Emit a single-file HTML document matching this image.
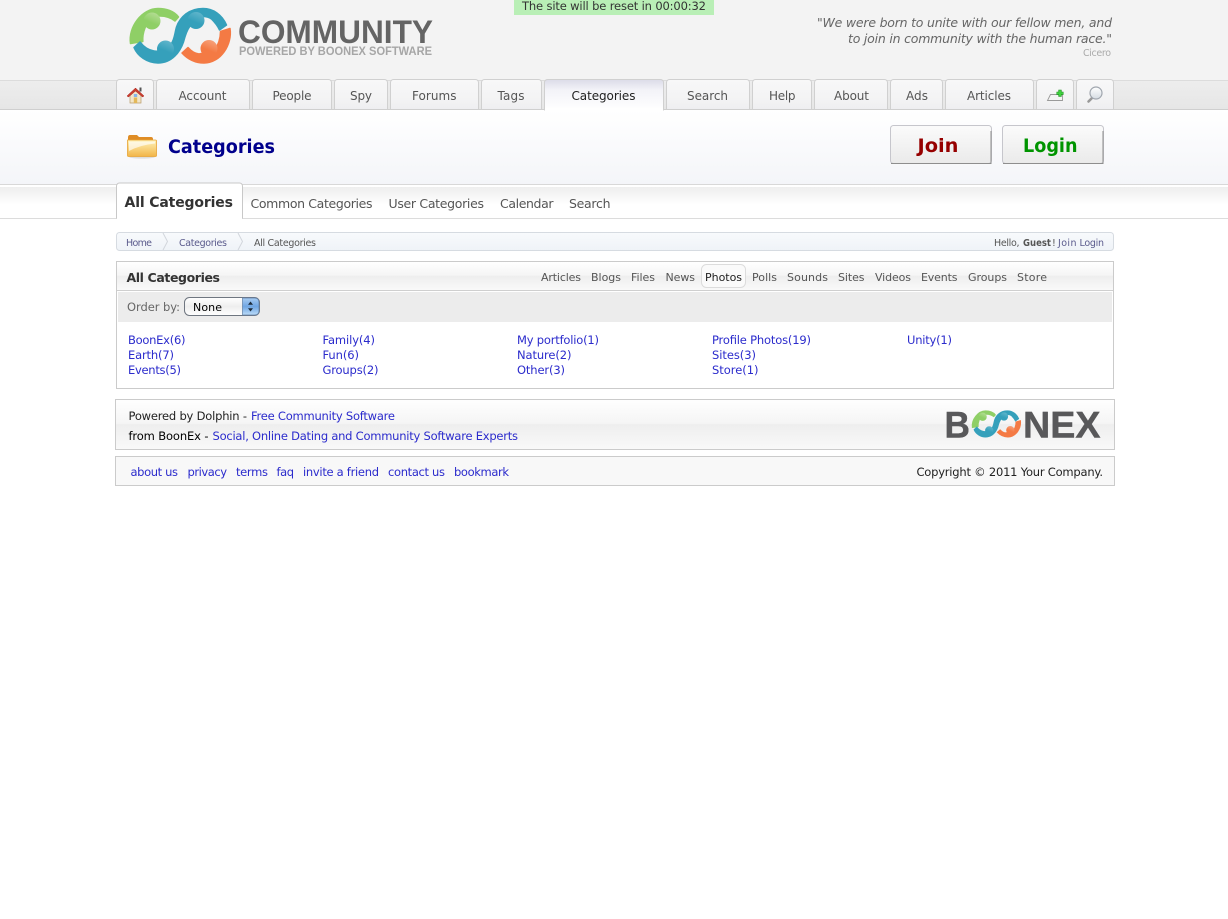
<!DOCTYPE html>
<html lang="en"><head><meta charset="utf-8"><title>Categories</title>
<style>
html,body{margin:0;padding:0;background:#fff}
svg{display:block}
text{font-family:"DejaVu Sans","Liberation Sans",sans-serif;font-size:12px;white-space:pre}
.n{fill:#555;font-size:12px}
.b{font-weight:bold}
.c{fill:#2b2bcc;font-size:11.5px}
.t{fill:#555;font-size:11px}
.s{fill:#555;font-size:12.5px}
.bc{fill:#5a5a8c;font-size:9.5px}
.f{fill:#222;font-size:11.5px}
.q{fill:#666;font-style:italic;font-size:12.5px}
</style></head><body>
<svg xmlns="http://www.w3.org/2000/svg" width="1228" height="919" viewBox="0 0 1228 919">
<defs>
<linearGradient id="tab" x1="0" y1="0" x2="0" y2="1"><stop offset="0" stop-color="#f8f8f8"/><stop offset=".5" stop-color="#f3f3f4"/><stop offset="1" stop-color="#e9e9ed"/></linearGradient>
<linearGradient id="act" x1="0" y1="0" x2="0" y2="1"><stop offset="0" stop-color="#dcdce8"/><stop offset=".35" stop-color="#f3f3f8"/><stop offset="1" stop-color="#fff"/></linearGradient>
<linearGradient id="strip" x1="0" y1="0" x2="0" y2="1"><stop offset="0" stop-color="#ededed"/><stop offset="1" stop-color="#e6e6e6"/></linearGradient>
<linearGradient id="title" x1="0" y1="0" x2="0" y2="1"><stop offset="0" stop-color="#fff"/><stop offset="1" stop-color="#f4f5f9"/></linearGradient>
<linearGradient id="sub" x1="0" y1="0" x2="0" y2="1"><stop offset="0" stop-color="#eeeeee"/><stop offset="1" stop-color="#fff"/></linearGradient>
<linearGradient id="btn" x1="0" y1="0" x2="0" y2="1"><stop offset="0" stop-color="#fbfbfb"/><stop offset="1" stop-color="#eaeaea"/></linearGradient>
<linearGradient id="hd" x1="0" y1="0" x2="0" y2="1"><stop offset="0" stop-color="#fff"/><stop offset=".48" stop-color="#f5f5f5"/><stop offset=".5" stop-color="#eeeeee"/><stop offset="1" stop-color="#f9f9f9"/></linearGradient>
<linearGradient id="bc" x1="0" y1="0" x2="0" y2="1"><stop offset="0" stop-color="#f8fafc"/><stop offset="1" stop-color="#eff3f8"/></linearGradient>
<linearGradient id="step" x1="0" y1="0" x2="0" y2="1"><stop offset="0" stop-color="#a9cdf2"/><stop offset=".5" stop-color="#6fa5e2"/><stop offset="1" stop-color="#bcdcf8"/></linearGradient>
<linearGradient id="sel" x1="0" y1="0" x2="0" y2="1"><stop offset="0" stop-color="#fff"/><stop offset=".5" stop-color="#eee"/><stop offset="1" stop-color="#fff"/></linearGradient>
<linearGradient id="fold" x1="0" y1="0" x2="0" y2="1"><stop offset="0" stop-color="#fff3b8"/><stop offset="1" stop-color="#f2b548"/></linearGradient>
<linearGradient id="lens" x1="0" y1="0" x2="0" y2="1"><stop offset="0" stop-color="#fff"/><stop offset="1" stop-color="#d5dbe2"/></linearGradient>
<linearGradient id="hg" x1=".7" y1="0" x2=".3" y2="1"><stop offset="0" stop-color="#b4dd94"/><stop offset=".6" stop-color="#8fcf66"/></linearGradient>
<linearGradient id="hb" x1=".7" y1="0" x2=".3" y2="1"><stop offset="0" stop-color="#62b6cc"/><stop offset=".6" stop-color="#35a0bb"/></linearGradient>
<linearGradient id="ho" x1=".7" y1="0" x2=".3" y2="1"><stop offset="0" stop-color="#f7a27c"/><stop offset=".6" stop-color="#f47a44"/></linearGradient>
<g id="rings">
<path d="M130.500 43.500C128 27 142 8.500 158 8.500C166 8.500 174 11 178.500 17L175 21C170 17 165 16 160 16L150 16L145 28C143 33 142.500 37 142.800 41.500Z" fill="#8fcf66" stroke="#8fcf66" stroke-width="1.500" stroke-linejoin="round"/>
<path d="M134 47.500C137.500 56 147 63 158 63C172 63 180 52 183.500 42C185.500 34 187 30 190 26L197 17C203 16 208 16 211.500 19C214.500 22 217.500 25.500 219.500 30L226.500 25C222 14.500 213 8.500 203 8.500C189 8.500 180 17 176.500 27C174.500 34 174.500 40 171 44C167 49 160 52 154 51C148 50 143 46 140 42Z" fill="#35a0bb" stroke="#35a0bb" stroke-width="1.500" stroke-linejoin="round"/>
<path d="M220.500 31.500L230 28.500C232.500 44 221 63 204 63C195 63 187.500 59 182 53L188 47.500C191 51 195 53.500 199 54L214 51C218.500 45 220.500 38 220.500 31.500Z" fill="#f47a44" stroke="#f47a44" stroke-width="1.500" stroke-linejoin="round"/>
<circle cx="152" cy="21" r="8.500" fill="url(#hg)"/>
<circle cx="196" cy="20.500" r="8.500" fill="url(#hb)"/>
<circle cx="165.500" cy="49" r="8.500" fill="url(#hb)"/>
<circle cx="209" cy="48.500" r="8.500" fill="url(#ho)"/>
</g>
</defs>

<!-- header -->
<rect width="1228" height="81" fill="#f3f3f3"/>
<rect y="80" width="1228" height="1" fill="#dcdcdc"/>
<rect y="81" width="1228" height="29" fill="url(#strip)"/>

<use href="#rings"/>
<text x="238" y="43" textLength="195" lengthAdjust="spacingAndGlyphs" style="font-family:'Liberation Sans',sans-serif;font-weight:bold;font-size:32px;fill:#646464">COMMUNITY</text>
<text x="239" y="55" textLength="193" lengthAdjust="spacingAndGlyphs" style="font-family:'Liberation Sans',sans-serif;font-weight:bold;font-size:11.5px;fill:#a6a6a6">POWERED BY BOONEX SOFTWARE</text>

<rect x="514" width="200" height="15" fill="#b9efb6"/>
<text x="522" y="10" textLength="184" style="font-size:11.5px;fill:#333">The site will be reset in 00:00:32</text>

<text class="q" x="817" y="27" textLength="295">"We were born to unite with our fellow men, and</text>
<text class="q" x="848" y="43" textLength="264">to join in community with the human race."</text>
<text x="1083" y="56" textLength="28" style="font-size:9.5px;fill:#aaa">Cicero</text>

<!-- nav tabs -->
<g fill="url(#tab)" stroke="#d0d0d0">
<rect x="116.500" y="79.500" width="37" height="40" rx="3"/>
<rect x="156.500" y="79.500" width="93" height="40" rx="3"/>
<rect x="252.500" y="79.500" width="79" height="40" rx="3"/>
<rect x="334.500" y="79.500" width="53" height="40" rx="3"/>
<rect x="390.500" y="79.500" width="88" height="40" rx="3"/>
<rect x="481.500" y="79.500" width="60" height="40" rx="3"/>
<rect x="666.500" y="79.500" width="83" height="40" rx="3"/>
<rect x="752.500" y="79.500" width="59" height="40" rx="3"/>
<rect x="814.500" y="79.500" width="73" height="40" rx="3"/>
<rect x="890.500" y="79.500" width="52" height="40" rx="3"/>
<rect x="945.500" y="79.500" width="88" height="40" rx="3"/>
<rect x="1036.500" y="79.500" width="37" height="40" rx="3"/>
<rect x="1076.500" y="79.500" width="37" height="40" rx="3"/>
</g>

<!-- title band -->
<rect y="110" width="1228" height="74" fill="url(#title)"/>
<rect y="109" width="1228" height="1" fill="#cfcfcf"/>
<path d="M544.500 110V83a3 3 0 0 1 3-3.500H660.500a3 3 0 0 1 3 3.500V110z" fill="url(#act)" stroke="#d0d0d0"/>
<rect x="545" y="108" width="118" height="3" fill="#fff"/>

<text class="n" x="178.500" y="100" textLength="48">Account</text>
<text class="n" x="272.500" y="100" textLength="39">People</text>
<text class="n" x="350" y="100" textLength="22">Spy</text>
<text class="n" x="412" y="100" textLength="44.500">Forums</text>
<text class="n" x="497.500" y="100" textLength="27">Tags</text>
<text class="n" x="571.500" y="100" textLength="64" style="fill:#222">Categories</text>
<text class="n" x="687" y="100" textLength="41">Search</text>
<text class="n" x="769" y="100" textLength="26.500">Help</text>
<text class="n" x="834" y="100" textLength="35">About</text>
<text class="n" x="906" y="100" textLength="22">Ads</text>
<text class="n" x="967" y="100" textLength="44">Articles</text>

<!-- home icon -->
<g>
<path d="M130 94.500V103H141V94.500L135.500 90Z" fill="#f3e6c8" stroke="#b99a6a" stroke-width=".7"/>
<path d="M127 96L135.500 88L144 96L142.500 97L135.500 91L128.500 97Z" fill="#c9402f" stroke="#a22" stroke-width=".5"/>
<rect x="139.500" y="87.500" width="2" height="4" fill="#555"/>
<rect x="133.800" y="94" width="3.400" height="3" fill="#86b4e8"/>
<rect x="133.800" y="97.500" width="3.400" height="5.500" fill="#e3b85a"/>
</g>
<!-- add icon -->
<g>
<path d="M1047.500 100.500H1062.500V94.500H1050.500Z" fill="#f4f4f4" stroke="#9a9a9a" stroke-width=".9"/>
<path d="M1060 89.800V96.800M1056.500 93.300H1063.500" stroke="#1d8f1d" stroke-width="3.200" fill="none"/>
<path d="M1060 90.300V96.300M1057 93.300H1063" stroke="#3fd03f" stroke-width="2" fill="none"/>
</g>
<!-- search icon -->
<g>
<path d="M1092 98L1088.500 101.500" stroke="#999" stroke-width="2.600" stroke-linecap="round"/>
<circle cx="1096" cy="93" r="6" fill="url(#lens)" stroke="#a0a6ae" stroke-width="1.200"/>
</g>

<!-- page title -->
<g>
<ellipse cx="142" cy="157" rx="13" ry="1.600" fill="#ddd"/>
<path d="M128 139V137.500Q128 135 130 135H137L139 137H151Q153 137 153 139V141H128Z" fill="#df8c25"/>
<path d="M127.500 140H155.500Q156.500 140 156.500 141V155.500Q156.500 156.500 155.500 156.500H128.500Q127.500 156.500 127.500 155.500Z" fill="url(#fold)" stroke="#e8a436" stroke-width=".8"/>
<path d="M129 141.500H155V143.500Q140 145 129 151Z" fill="#fff" opacity=".65"/>
</g>
<text x="168" y="153" textLength="107" lengthAdjust="spacingAndGlyphs" class="b" style="font-size:18.500px;fill:#00008c">Categories</text>

<!-- join/login -->
<rect x="890.500" y="125.500" width="101" height="38" rx="3" fill="url(#btn)" stroke="#c6c6cc"/>
<path d="M891 163.500H991V131" fill="none" stroke="#8e8e8e"/>
<rect x="1002.500" y="125.500" width="101" height="38" rx="3" fill="url(#btn)" stroke="#c6c6cc"/>
<path d="M1003 163.500H1103V131" fill="none" stroke="#8e8e8e"/>
<text x="917.500" y="152" textLength="41" lengthAdjust="spacingAndGlyphs" class="b" style="font-size:19px;fill:#960000">Join</text>
<text x="1023" y="152" textLength="54.500" lengthAdjust="spacingAndGlyphs" class="b" style="font-size:18.500px;fill:#009400">Login</text>

<!-- sub nav -->
<rect y="184" width="1228" height="1" fill="#d8d8d8"/>
<rect y="185" width="1228" height="2" fill="#fff"/>
<rect y="187" width="1228" height="18" fill="url(#sub)"/>
<rect y="218" width="1228" height="1" fill="#dcdcdc"/>
<path d="M116.500 218.500V186a3 3 0 0 1 3-3H239.500a3 3 0 0 1 3 3V218.500" fill="#fff" stroke="#c8c8c8"/>
<rect x="117" y="217" width="125" height="3" fill="#fff"/>
<text x="124.500" y="207" textLength="108.500" class="b" style="font-size:14px;fill:#333">All Categories</text>
<text class="s" x="250.500" y="208" textLength="122">Common Categories</text>
<text class="s" x="388.500" y="208" textLength="95.500">User Categories</text>
<text class="s" x="500" y="208" textLength="53.500">Calendar</text>
<text class="s" x="569" y="208" textLength="41.500">Search</text>

<!-- breadcrumb -->
<rect x="116.500" y="232.500" width="997" height="18" rx="3" fill="url(#bc)" stroke="#d6dbe1"/>
<path d="M163 233L167.500 241.500L163 250M238 233L242.500 241.500L238 250" fill="none" stroke="#d2d6dc"/>
<text class="bc" x="126" y="246" textLength="26">Home</text>
<text class="bc" x="179" y="246" textLength="48">Categories</text>
<text class="bc" x="254" y="246" textLength="62" style="fill:#555">All Categories</text>
<text class="bc" x="994" y="246" textLength="25.500" style="fill:#555">Hello,</text>
<text class="bc b" x="1023" y="246" textLength="28" lengthAdjust="spacingAndGlyphs" style="fill:#555">Guest</text>
<text class="bc" x="1052" y="246" textLength="3" style="fill:#555">!</text>
<text class="bc" x="1058" y="246" textLength="18.500">Join</text>
<text class="bc" x="1079.500" y="246" textLength="24.500">Login</text>

<!-- main box -->
<rect x="116.500" y="261.500" width="997" height="127" fill="#fff" stroke="#cbcbcb"/>
<rect x="117" y="262" width="996" height="28" fill="url(#hd)"/>
<rect x="117" y="290" width="996" height="1" fill="#cfcfcf"/>
<rect x="118" y="292" width="994" height="30" fill="#ececec"/>
<text x="126.500" y="282" textLength="93.500" class="b" style="font-size:12.500px;fill:#333">All Categories</text>
<rect x="701.500" y="264.500" width="44" height="23" rx="5" fill="#fafafa" stroke="#dcdcdc"/>
<text class="t" x="541" y="281" textLength="40">Articles</text>
<text class="t" x="591" y="281" textLength="30">Blogs</text>
<text class="t" x="631" y="281" textLength="24">Files</text>
<text class="t" x="665.500" y="281" textLength="29.500">News</text>
<text class="t" x="705" y="281" textLength="37" style="fill:#222">Photos</text>
<text class="t" x="752" y="281" textLength="25">Polls</text>
<text class="t" x="787" y="281" textLength="41">Sounds</text>
<text class="t" x="838" y="281" textLength="26.500">Sites</text>
<text class="t" x="875" y="281" textLength="36">Videos</text>
<text class="t" x="921" y="281" textLength="36.500">Events</text>
<text class="t" x="968" y="281" textLength="39">Groups</text>
<text class="t" x="1017" y="281" textLength="30">Store</text>

<text x="127" y="311" textLength="53" style="font-size:11.500px;fill:#666">Order by:</text>
<rect x="184.500" y="297.500" width="75" height="18" rx="5" fill="url(#sel)" stroke="#6f7680"/>
<path d="M242.500 298H254.500Q259 298 259 302.500V310.500Q259 315 254.500 315H242.500Z" fill="url(#step)" stroke="#5d7ea6" stroke-width=".7"/>
<path d="M250.500 301.500L253 304.800H248ZM250.500 311.500L253 308.200H248Z" fill="#1d2b3a"/>
<text x="193" y="311" textLength="29" style="font-size:11px;fill:#000">None</text>

<text class="c" x="128" y="344" textLength="57.500">BoonEx(6)</text>
<text class="c" x="128" y="359" textLength="46">Earth(7)</text>
<text class="c" x="128" y="374" textLength="53">Events(5)</text>
<text class="c" x="322.500" y="344" textLength="52.500">Family(4)</text>
<text class="c" x="322.500" y="359" textLength="36.500">Fun(6)</text>
<text class="c" x="322.500" y="374" textLength="56">Groups(2)</text>
<text class="c" x="517" y="344" textLength="82">My portfolio(1)</text>
<text class="c" x="517" y="359" textLength="54.500">Nature(2)</text>
<text class="c" x="517" y="374" textLength="48">Other(3)</text>
<text class="c" x="712" y="344" textLength="99">Profile Photos(19)</text>
<text class="c" x="712" y="359" textLength="44">Sites(3)</text>
<text class="c" x="712" y="374" textLength="46.500">Store(1)</text>
<text class="c" x="907" y="344" textLength="45">Unity(1)</text>

<!-- footer 1 -->
<rect x="115.500" y="399.500" width="999" height="50" fill="url(#hd)" stroke="#cbcbcb"/>
<text class="f" x="128.500" y="420" textLength="118.500">Powered by Dolphin -</text>
<text class="c" x="251" y="420" textLength="144">Free Community Software</text>
<text class="f" x="128.500" y="440" textLength="80" style="fill:#000">from BoonEx -</text>
<text class="c" x="212.500" y="440" textLength="305.500">Social, Online Dating and Community Software Experts</text>
<text x="944.500" y="437.500" textLength="25.500" lengthAdjust="spacingAndGlyphs" style="font-family:'Liberation Sans',sans-serif;font-weight:bold;font-size:37px;fill:#58585a;stroke:#58585a;stroke-width:.4">B</text>
<text x="1023" y="437.500" textLength="77.500" lengthAdjust="spacingAndGlyphs" style="font-family:'Liberation Sans',sans-serif;font-weight:bold;font-size:37px;fill:#58585a;stroke:#58585a;stroke-width:.4">NEX</text>
<use href="#rings" transform="translate(908.950 406.600) scale(.485)"/>

<!-- footer 2 -->
<rect x="115.500" y="456.500" width="999" height="29" fill="#f8f8f8" stroke="#cbcbcb"/>
<text class="c" x="130.500" y="476" textLength="47.500">about us</text>
<text class="c" x="187.500" y="476" textLength="39.500">privacy</text>
<text class="c" x="236" y="476" textLength="32">terms</text>
<text class="c" x="276.500" y="476" textLength="17.500">faq</text>
<text class="c" x="303" y="476" textLength="76">invite a friend</text>
<text class="c" x="388" y="476" textLength="57">contact us</text>
<text class="c" x="454" y="476" textLength="55">bookmark</text>
<text class="f" x="916.500" y="476" textLength="186.500">Copyright © 2011 Your Company.</text>
</svg>
</body></html>
